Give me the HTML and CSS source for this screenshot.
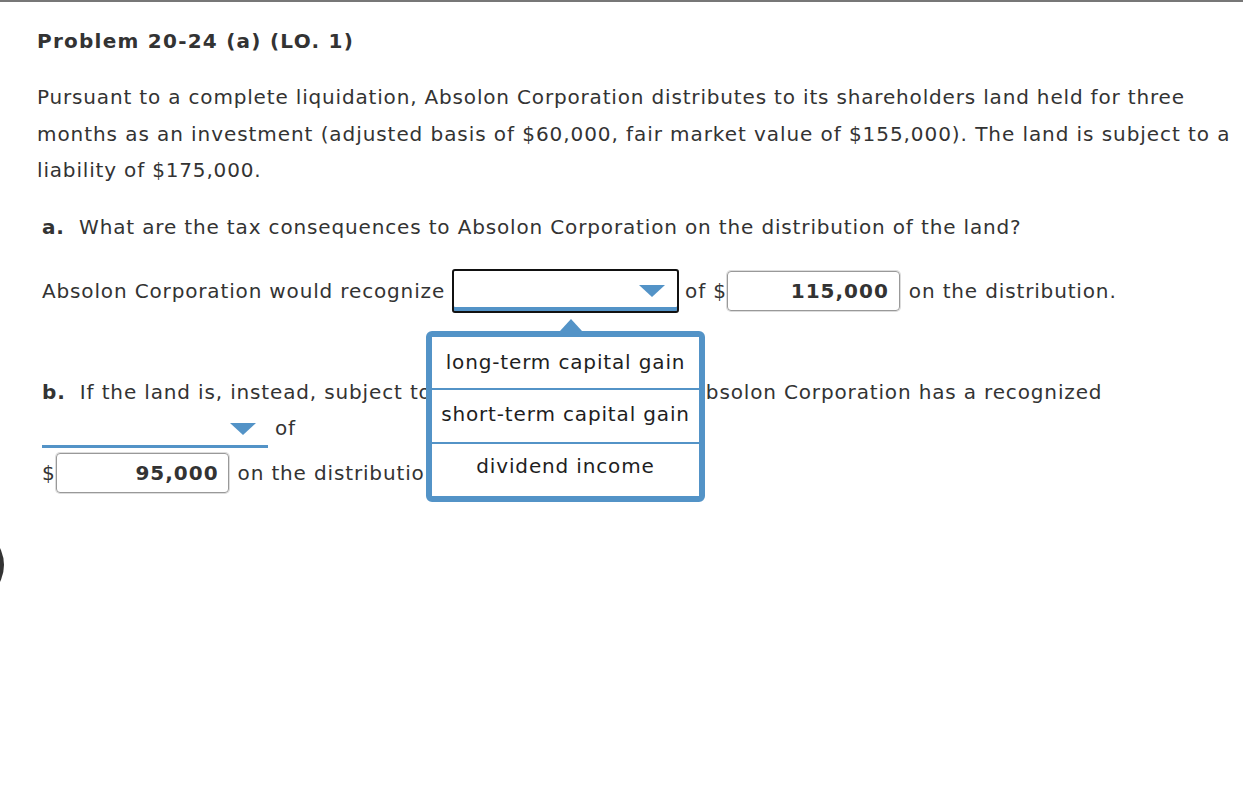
FILE: index.html
```html
<!DOCTYPE html>
<html lang="en">
<head>
<meta charset="utf-8">
<title>Problem 20-24 (a) (LO. 1)</title>
<link rel="stylesheet" href="styles.css">
</head>
<body>
<div class="page">
  <h1 class="title">Problem 20-24 (a) (LO. 1)</h1>
  <p class="intro">Pursuant to a complete liquidation, Absolon Corporation distributes to its shareholders land held for three<br><span class="line2">months as an investment (adjusted basis of $60,000, fair market value of $155,000). The land is subject to a</span><br>liability of $175,000.</p>

  <div class="part part-a">
    <div class="question"><b class="label">a.</b> What are the tax consequences to Absolon Corporation on the distribution of the land?</div>
    <div class="answer-row">
      <span>Absolon Corporation would recognize</span>
      <div class="select select-open">
        <span class="arrow"></span>
      </div>
      <span class="of">of $</span>
      <div class="amount">115,000</div>
      <span class="after">on the distribution.</span>
    </div>
  </div>

  <div class="part part-b">
    <div class="question"><b class="label">b.</b> If the land is, instead, subject to a liability of $125,000, Absolon Corporation has a recognized</div>
    <div class="row-select">
      <div class="select select-flat"><span class="arrow"></span></div>
      <span class="of-b">of</span>
    </div>
    <div class="row-amount">
      <span>$</span>
      <div class="amount amount-b">95,000</div>
      <span class="after">on the distribution.</span>
    </div>
  </div>

  <div class="menu">
    <span class="caret"></span>
    <div class="option">long-term capital gain</div>
    <div class="option">short-term capital gain</div>
    <div class="option option-last">dividend income</div>
  </div>

  <span class="side-knob"></span>
</div>
</body>
</html>
```

FILE: styles.css
```css
html, body {
  margin: 0;
  padding: 0;
  background: #fff;
}
body {
  font-family: "DejaVu Sans", Verdana, sans-serif;
  font-size: 20px;
  letter-spacing: 0.85px;
  color: #333;
  border-top: 2px solid #777;
  height: 783px;
  overflow: hidden;
}
.page {
  position: relative;
  padding: 24px 0 0 37px;
}
.title {
  margin: 0;
  font-size: 20px;
  line-height: 30px;
  font-weight: bold;
  letter-spacing: 1.25px;
  color: #333;
}
.intro {
  margin: 23px 0 0;
  line-height: 36.5px;
  letter-spacing: 0.83px;
  white-space: nowrap;
}
.line2 {
  letter-spacing: 0.93px;
}
.part {
  padding-left: 5px;
  white-space: nowrap;
}
.question {
  line-height: 36px;
}
.label {
  margin-right: 7px;
}
.part-a .question {
  margin-top: 20px;
}
.answer-row {
  display: flex;
  align-items: center;
  margin-top: 24px;
  height: 44px;
}
.select {
  position: relative;
  box-sizing: border-box;
  width: 227px;
  background: #fff;
}
.select-open {
  margin-left: 7px;
  height: 44px;
  border: 2px solid #111;
  border-radius: 3px;
  box-shadow: inset 0 -4px 0 #5393c7;
}
.arrow {
  position: absolute;
  width: 0;
  height: 0;
  border-left: 13px solid transparent;
  border-right: 13px solid transparent;
  border-top: 12px solid #5393c7;
}
.select-open .arrow {
  right: 12px;
  top: 14px;
}
.of {
  margin-left: 6px;
}
.amount {
  box-sizing: border-box;
  width: 173px;
  height: 40px;
  margin-left: 0;
  border: 1px solid #999;
  border-radius: 4px;
  box-shadow: 0 0 0 1px #ddd;
  text-align: right;
  padding-right: 10px;
  font-weight: bold;
  letter-spacing: 1px;
  line-height: 38px;
  color: #333;
}
.after {
  margin-left: 9px;
}
.part-b .question {
  margin-top: 61px;
}
.row-select {
  display: flex;
  align-items: center;
  height: 38px;
}
.select-flat {
  width: 226px;
  height: 38px;
  border-bottom: 3px solid #5393c7;
}
.select-flat .arrow {
  right: 12px;
  top: 13px;
}
.of-b {
  margin-left: 7px;
  margin-top: -2px;
}
.row-amount {
  display: flex;
  align-items: center;
  margin-top: 5px;
  height: 40px;
}
.amount-b {
  margin-left: 0;
  padding-right: 9px;
}
.menu {
  position: absolute;
  left: 426px;
  top: 329px;
  width: 279px;
  box-sizing: border-box;
  border: 6px solid #5393c7;
  border-radius: 6px;
  background: #fff;
  color: #1e1e1e;
}
.caret {
  position: absolute;
  left: 128px;
  top: -18px;
  width: 0;
  height: 0;
  border-left: 11px solid transparent;
  border-right: 11px solid transparent;
  border-bottom: 12px solid #5393c7;
}
.option {
  height: 52px;
  line-height: 48px;
  text-align: center;
  white-space: nowrap;
  border-top: 2px solid #5393c7;
}
.option:first-of-type {
  border-top: none;
  height: 51px;
  line-height: 50px;
}
.option-last {
  line-height: 45px;
}
.side-knob {
  position: absolute;
  left: -72px;
  top: 525px;
  width: 76px;
  height: 76px;
  border-radius: 50%;
  background: #333;
}
```
